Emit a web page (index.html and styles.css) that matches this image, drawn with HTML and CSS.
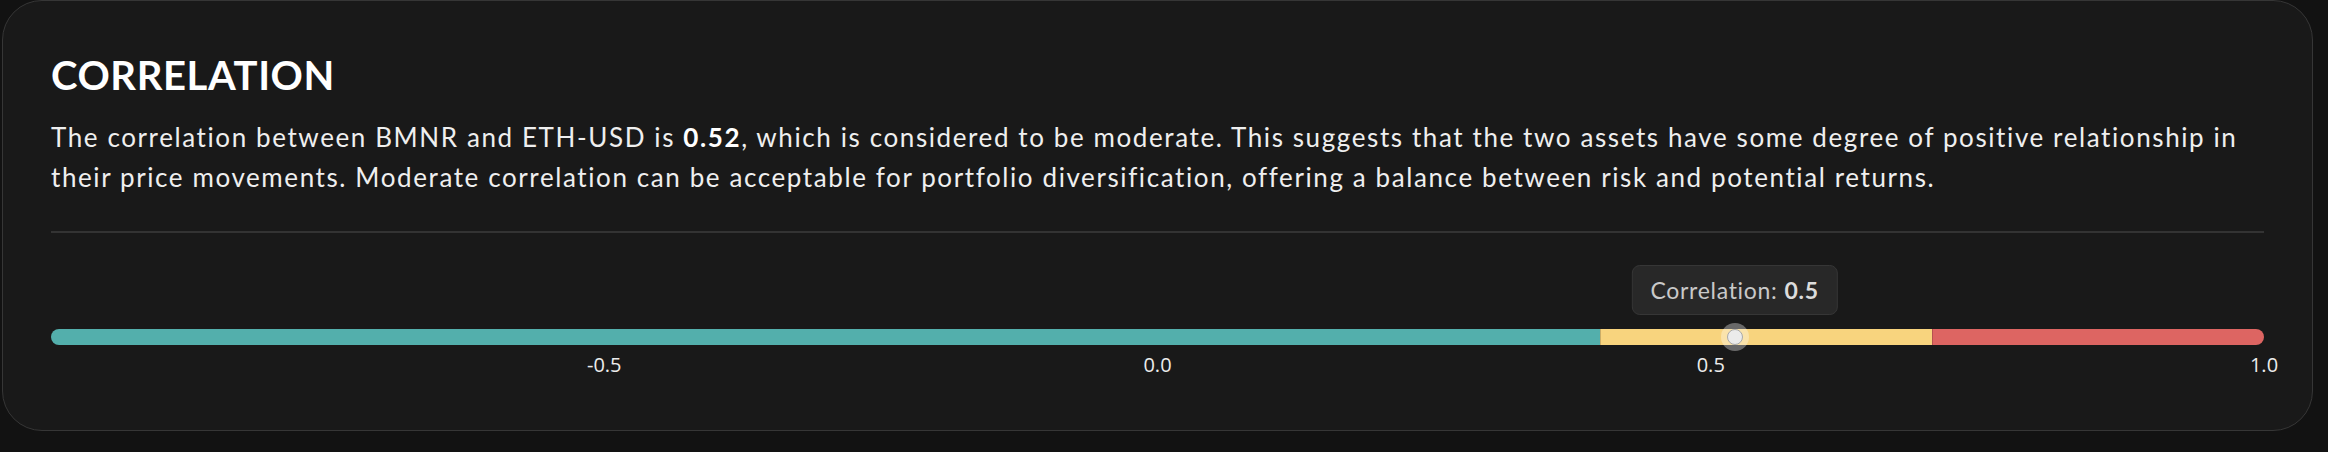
FILE: index.html
```html
<!DOCTYPE html>
<html lang="en">
<head>
<meta charset="utf-8">
<title>Correlation</title>
<link rel="stylesheet" href="styles.css">
</head>
<body>
  <section class="card">
    <h2 class="card-title">CORRELATION</h2>
    <p class="summary">The correlation between BMNR and ETH-USD is <strong>0.52</strong>, which is considered to be moderate. This suggests that the two assets have some degree of positive relationship in their price movements. Moderate correlation can be acceptable for portfolio diversification, offering a balance between risk and potential returns.</p>
    <hr class="divider">
    <div class="gauge">
      <div class="track">
        <div class="segment segment-low" style="width: 70%"></div>
        <div class="segment segment-mid" style="width: 15%"></div>
        <div class="segment segment-high" style="width: 15%"></div>
        <div class="marker" style="left: 76.08%">
          <div class="tooltip">Correlation: <strong>0.5</strong></div>
          <span class="thumb"></span>
        </div>
      </div>
      <div class="axis">
        <span class="tick" style="left: 25%">-0.5</span>
        <span class="tick" style="left: 50%">0.0</span>
        <span class="tick" style="left: 75%">0.5</span>
        <span class="tick" style="left: 100%">1.0</span>
      </div>
    </div>
  </section>
</body>
</html>
```

FILE: styles.css
```css
html, body {
  margin: 0;
  padding: 0;
}

body {
  background: #121212;
  font-family: "Lato", "Open Sans", sans-serif;
  color: #ededed;
  width: 2328px;
  height: 452px;
  overflow: hidden;
}

.card {
  box-sizing: border-box;
  width: 2311px;
  height: 431px;
  margin-left: 2px;
  border: 1px solid #363636;
  border-radius: 40px;
  background: #191919;
  padding: 50px 48px 0 48px;
}

.card-title {
  margin: 0;
  font-size: 40px;
  line-height: 48px;
  font-weight: 700;
  letter-spacing: 0.6px;
  color: #ffffff;
}

.summary {
  margin: 18px 0 0;
  font-size: 26px;
  line-height: 40px;
  letter-spacing: 1.6px;
  color: #efefef;
}

.summary strong {
  font-weight: 700;
  color: #ffffff;
}

.divider {
  margin: 34px 0 0;
  border: 0;
  height: 2px;
  background: #333333;
}

.gauge {
  margin-top: 96px;
}

.track {
  position: relative;
  display: flex;
  height: 16px;
}

.segment {
  height: 100%;
}

.segment-low {
  background: #53afac;
  border-radius: 8px 0 0 8px;
}

.segment-mid {
  background: #f8d47e;
  box-shadow: inset 1px 0 0 rgba(0, 0, 0, 0.18);
}

.segment-high {
  background: #dd6562;
  border-radius: 0 8px 8px 0;
  box-shadow: inset 1px 0 0 rgba(0, 0, 0, 0.18);
}

/* marker sits over the track at the current value */
.marker {
  position: absolute;
  top: 50%;
  width: 0;
  height: 0;
}

.thumb {
  position: absolute;
  left: -14px;
  top: -14px;
  width: 28px;
  height: 28px;
  border-radius: 50%;
  background: rgba(255, 255, 255, 0.35);
}

.thumb::after {
  content: "";
  position: absolute;
  left: 6px;
  top: 6px;
  width: 14px;
  height: 14px;
  border-radius: 50%;
  background: #ebebeb;
  border: 1px solid #a9a9a9;
}

.tooltip {
  position: absolute;
  bottom: 22px;
  left: 0;
  transform: translateX(-50%);
  box-sizing: border-box;
  height: 50px;
  padding: 0 18px;
  display: flex;
  align-items: center;
  white-space: nowrap;
  background: #282828;
  border: 1px solid #363636;
  border-radius: 8px;
  font-size: 23px;
  letter-spacing: 0.7px;
  color: #c9c9c9;
}

.tooltip strong {
  margin-left: 7px;
  font-weight: 700;
  color: #dcdcdc;
}

.axis {
  position: relative;
  height: 24px;
  margin-top: 8px;
}

.tick {
  position: absolute;
  top: 0;
  transform: translateX(-50%);
  font-family: "Open Sans", "Noto Sans", sans-serif;
  font-size: 20px;
  line-height: 24px;
  color: #ececec;
}
```
